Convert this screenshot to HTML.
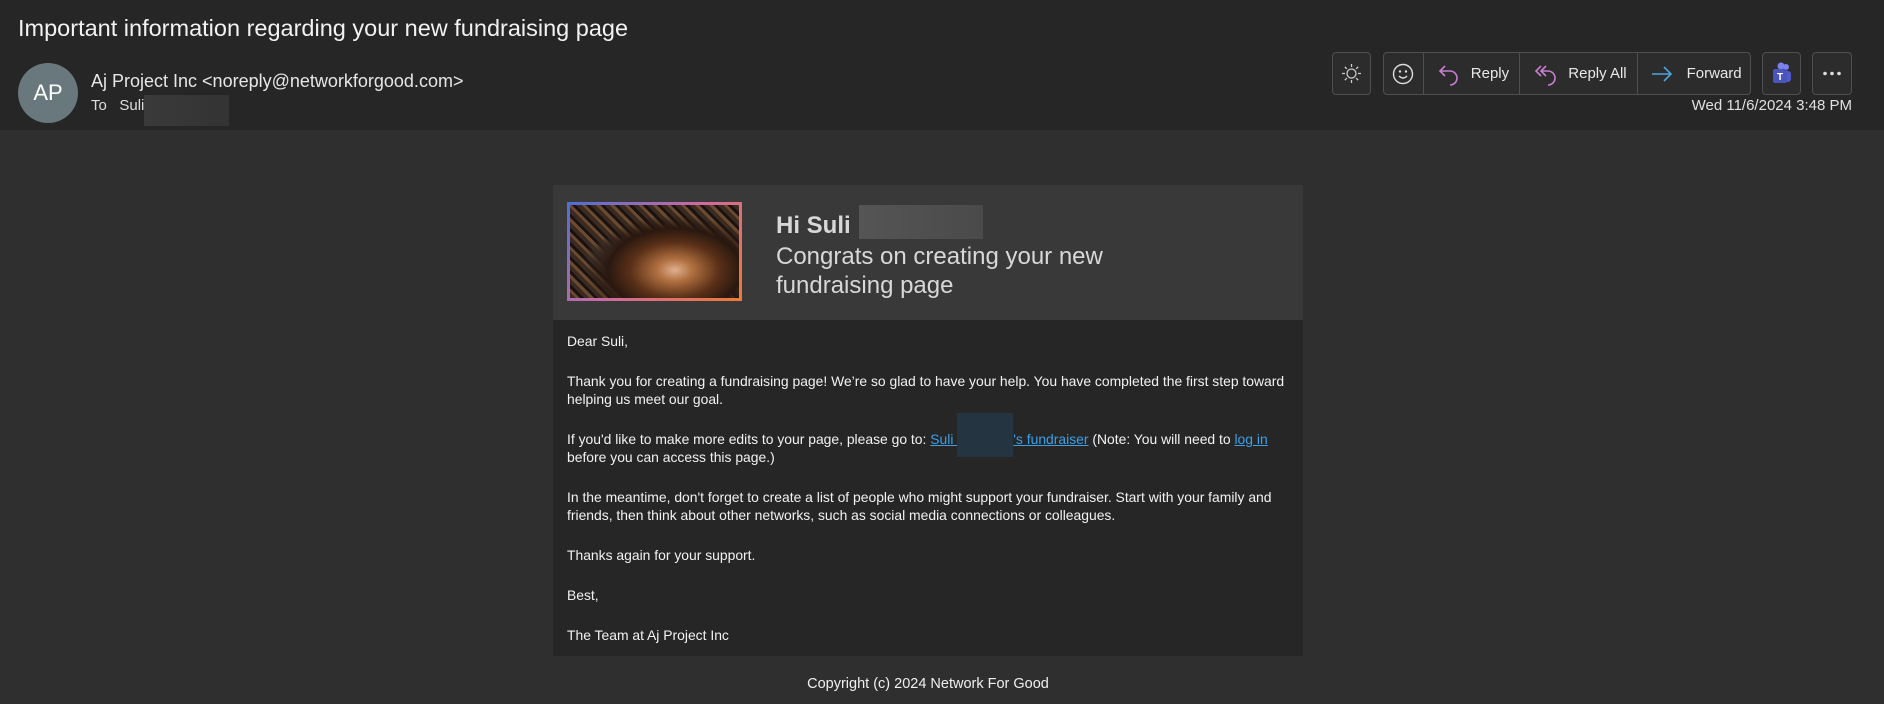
<!DOCTYPE html>
<html><head><meta charset="utf-8"><style>
*{box-sizing:border-box;margin:0;padding:0}
body{width:1884px;height:704px;background:#2f2f2f;font-family:"Liberation Sans",sans-serif;overflow:hidden;position:relative;color:#fff}
.top{position:absolute;left:0;top:0;width:1884px;height:130px;background:#262626}
.title{position:absolute;left:18px;top:15px;font-size:23.5px;color:#f2f2f2}
.av{position:absolute;left:18px;top:63px;width:60px;height:60px;border-radius:50%;background:#68787c;color:#fff;font-size:22px;text-align:center;line-height:60px}
.from{position:absolute;left:91px;top:71px;font-size:18px;color:#e6e6e6}
.to{position:absolute;left:91px;top:97px;font-size:15px;color:#ddd}
.blur{position:absolute;left:144px;top:95px;width:85px;height:31px;background:linear-gradient(90deg,#3a3a3a,#333)}
.btn{position:absolute;top:52px;height:43px;border:1px solid #4f4f4f;border-radius:4px;background:#2c2c2c}
.grp{position:absolute;top:52px;left:1383px;width:368px;height:43px;border:1px solid #4f4f4f;border-radius:4px;background:#2c2c2c;display:flex}
.grp div{border-right:1px solid #4f4f4f;height:100%;display:flex;align-items:center;font-size:15px;color:#e8e8e8}
.grp div:last-child{border-right:0}
.date{position:absolute;right:32px;top:97px;font-size:15px;color:#e0e0e0}
.card{position:absolute;left:553px;top:185px;width:750px;height:471px;background:#262626}
.ch{height:135px;background:#393939;position:relative}
.img{position:absolute;left:14px;top:17px;width:175px;height:99px;padding:3px;background:linear-gradient(135deg,#4a6fd8,#d06aa0 50%,#f07a30)}
.img div{width:100%;height:100%;background:radial-gradient(ellipse at 62% 70%,#e0b090 0,#b07040 12%,#5a3018 30%,#2a1810 45%,transparent 60%),radial-gradient(ellipse at 35% 55%,#b0a8a0 0,#403830 15%,transparent 30%),repeating-linear-gradient(45deg,#3a2a20 0 4px,#6a4a30 4px 7px,#1a1210 7px 10px)}
.hi{position:absolute;left:223px;top:27px;font-size:24px;font-weight:bold;color:#d8d8d8}
.hib{position:absolute;left:306px;top:20px;width:124px;height:34px;background:linear-gradient(90deg,#555,#4a4a4a)}
.cg{position:absolute;left:223px;top:57px;font-size:24px;line-height:29px;color:#d8d8d8}
.bd{padding:12px 10px 0 14px;font-size:13.9px;line-height:18px;color:#f2f2f2}
.bd p{margin-bottom:22px}
a{color:#3aa0e8;text-decoration:underline}
.cp{position:absolute;left:553px;width:750px;top:676px;text-align:center;font-size:14.5px;color:#f0f0f0}
.lb{position:relative;display:inline-block;width:56px;height:1px}
.lb i{position:absolute;left:0;top:-30px;width:56px;height:44px;background:#243440}
</style></head><body>
<div class="top"></div>
<div class="title">Important information regarding your new fundraising page</div>
<div class="av">AP</div>
<div class="from">Aj Project Inc &lt;noreply@networkforgood.com&gt;</div>
<div class="to">To&nbsp;&nbsp; Suli</div>
<div class="blur"></div>
<div class="btn" style="left:1332px;width:39px"><svg width="37" height="41" viewBox="0 0 37 41"><g stroke="#ccc" stroke-width="1.3" fill="none"><circle cx="18.5" cy="20.5" r="4.5"/><path d="M18.5 11v3M18.5 27v3M9 20.5h3M25 20.5h3M11.8 13.8l2.1 2.1M23.1 25.1l2.1 2.1M11.8 27.2l2.1-2.1M23.1 15.9l2.1-2.1"/></g></svg></div>
<div class="grp">
<div style="width:40px;justify-content:center"><svg width="24" height="24" viewBox="0 0 24 24"><g stroke="#ddd" stroke-width="1.4" fill="none"><circle cx="12" cy="12" r="9.5"/><path d="M8 14q4 4 8 0"/></g><circle cx="9" cy="9.5" r="1.2" fill="#ddd"/><circle cx="15" cy="9.5" r="1.2" fill="#ddd"/></svg></div>
<div style="width:97px;padding-left:13px"><svg width="24" height="24" viewBox="0 0 24 24" style="margin-right:10px"><path d="M8 4L3 9l5 5M3 9h10a7 7 0 0 1 0 14" stroke="#c77fd0" stroke-width="1.6" fill="none"/></svg>Reply</div>
<div style="width:118px;padding-left:13px"><svg width="26" height="24" viewBox="0 0 26 24" style="margin-right:9px"><path d="M8 4L3 9l5 5M13 4L8 9l5 5M8 9h7a7 7 0 0 1 0 14" stroke="#c77fd0" stroke-width="1.6" fill="none"/></svg>Reply All</div>
<div style="width:113px;padding-left:12px"><svg width="24" height="24" viewBox="0 0 24 24" style="margin-right:13px"><path d="M2 12h19M14 5l7 7-7 7" stroke="#4ea3dd" stroke-width="1.6" fill="none"/></svg>Forward</div>
</div>
<div class="btn" style="left:1762px;width:39px"><svg width="37" height="41" viewBox="0 0 37 41"><circle cx="23" cy="14" r="3" fill="#7b83eb"/><rect x="18" y="18" width="10" height="11" rx="3" fill="#5059c9"/><circle cx="18" cy="13" r="3.5" fill="#7b83eb"/><rect x="10" y="16" width="14" height="14" rx="2" fill="#4b53bc"/><text x="17" y="27" font-size="10" font-weight="bold" fill="#fff" text-anchor="middle" font-family="Liberation Sans">T</text></svg></div>
<div class="btn" style="left:1812px;width:40px"><svg width="38" height="41" viewBox="0 0 38 41"><g fill="#ddd"><circle cx="12" cy="20.5" r="1.8"/><circle cx="19" cy="20.5" r="1.8"/><circle cx="26" cy="20.5" r="1.8"/></g></svg></div>
<div class="date">Wed 11/6/2024 3:48 PM</div>
<div class="card">
<div class="ch"><div class="img"><div></div></div><div class="hi">Hi Suli</div><div class="hib"></div><div class="cg">Congrats on creating your new<br>fundraising page</div></div>
<div class="bd">
<p>Dear Suli,</p>
<p>Thank you for creating a fundraising page! We’re so glad to have your help. You have completed the first step toward helping us meet our goal.</p>
<p>If you'd like to make more edits to your page, please go to: <a>Suli&nbsp;</a><span class="lb"><i></i></span><a>'s fundraiser</a> (Note: You will need to <a>log in</a> before you can access this page.)</p>
<p>In the meantime, don't forget to create a list of people who might support your fundraiser. Start with your family and friends, then think about other networks, such as social media connections or colleagues.</p>
<p>Thanks again for your support.</p>
<p>Best,</p>
<p>The Team at Aj Project Inc</p>
</div>
</div>
<div class="cp">Copyright (c) 2024 Network For Good</div>
</body></html>
